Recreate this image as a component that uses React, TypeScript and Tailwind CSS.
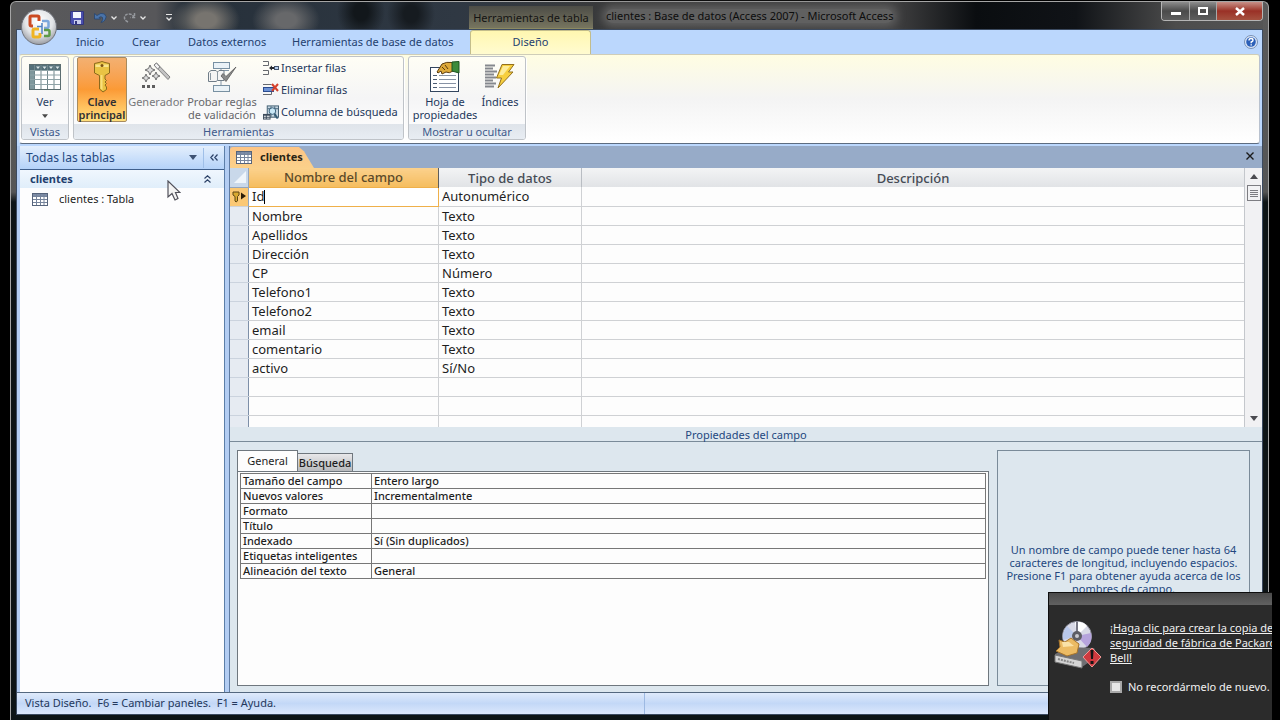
import React from 'react';

const fields = [
  { name: 'Id', type: 'Autonumérico' },
  { name: 'Nombre', type: 'Texto' },
  { name: 'Apellidos', type: 'Texto' },
  { name: 'Dirección', type: 'Texto' },
  { name: 'CP', type: 'Número' },
  { name: 'Telefono1', type: 'Texto' },
  { name: 'Telefono2', type: 'Texto' },
  { name: 'email', type: 'Texto' },
  { name: 'comentario', type: 'Texto' },
  { name: 'activo', type: 'Sí/No' },
  { name: '', type: '' },
  { name: '', type: '' },
  { name: '', type: '' }
];

const properties = [
  { id: 'size', label: 'Tamaño del campo', value: 'Entero largo' },
  { id: 'new-values', label: 'Nuevos valores', value: 'Incrementalmente' },
  { id: 'format', label: 'Formato', value: '' },
  { id: 'title', label: 'Título', value: '' },
  { id: 'indexed', label: 'Indexado', value: 'Sí (Sin duplicados)' },
  { id: 'smart-tags', label: 'Etiquetas inteligentes', value: '' },
  { id: 'align', label: 'Alineación del texto', value: 'General' }
];

/* Icons */

const OfficeLogo = () => (
  <svg width="38" height="38" viewBox="0 0 38 38" fill="none" aria-hidden="true">
    <defs>
      <radialGradient id="orb" cx="50%" cy="35%" r="65%">
        <stop offset="0" stopColor="#ffffff" />
        <stop offset="0.6" stopColor="#e3e5e8" />
        <stop offset="1" stopColor="#9a9da3" />
      </radialGradient>
    </defs>
    <circle cx="19" cy="19" r="17.5" fill="url(#orb)" stroke="#6d7078" />
    <path d="M19 13V9.500Q19 8 17.500 8H11.500Q10 8 10 9.500V16.500Q10 18 11.500 18H13" stroke="#cb4a22" strokeWidth="3" />
    <path d="M22 13H27Q28.500 13 28.500 14.500V18.500Q28.500 20 27 20H24" stroke="#7ba7dc" strokeWidth="2.500" />
    <path d="M19 21H14.500Q13 21 13 22.500V27.500Q13 29 14.500 29H18.500Q20 29 20 27.500V25" stroke="#efb424" strokeWidth="3" />
    <path d="M24 22H28Q29.500 22 29.500 23.500V26.500Q29.500 28 28 28H24" stroke="#5d9a47" strokeWidth="2.500" />
    <path d="M22 15V18.500H17M22 18.500V26" stroke="#4f83c4" strokeWidth="1.500" />
  </svg>
);

const SaveIcon = () => (
  <svg width="14" height="14" viewBox="0 0 14 14" aria-hidden="true">
    <path d="M0.500 0.500H13.500V13.500H2L0.500 12Z" fill="#4a4fae" stroke="#33367c" />
    <path d="M3 1H11V7H3Z" fill="#f3f5fd" />
    <path d="M4 9H11V13H4Z" fill="#c9cdec" />
    <path d="M5 10H7V13H5Z" fill="#33367c" />
  </svg>
);

const UndoIcon = () => (
  <svg width="13" height="12" viewBox="0 0 13 12" aria-hidden="true">
    <path d="M0.500 7V1.500L3 3.500Q7 0 10.500 2Q13.500 4.500 11 8Q9.500 10 7 10.500Q9.500 7.500 8.500 5.500Q7 4 5 5.500L6.500 7Z" fill="#4a73a8" stroke="#27456f" strokeWidth="0.800" />
  </svg>
);

const RedoIcon = () => (
  <svg width="13" height="12" viewBox="0 0 13 12" fill="none" stroke="#95989d" strokeWidth="1.500" aria-hidden="true">
    <path d="M5 10Q1 8 1.500 5Q2.500 2 6 2Q9 2 11 5M11.500 1V5.500H7.500" strokeDasharray="3 1" />
  </svg>
);

const SmallChevron = () => (
  <svg width="6" height="4" viewBox="0 0 6 4" aria-hidden="true">
    <path d="M0.500 0.500L3 3L5.500 0.500" fill="none" stroke="#e6e6e6" strokeWidth="1.300" />
  </svg>
);

const Triangle = ({ className, up }: { className?: string; up?: boolean }) => (
  <svg width="8" height="5" viewBox="0 0 8 5" className={className} aria-hidden="true">
    <path d={up ? 'M0 5L4 0L8 5Z' : 'M0 0H8L4 5Z'} fill="currentColor" />
  </svg>
);

const GridIcon = () => (
  <svg width="32" height="26" viewBox="0 0 32 26" aria-hidden="true">
    <rect x="0.500" y="0.500" width="31" height="25" fill="#ffffff" stroke="#5b6d70" />
    <rect x="1" y="1" width="30" height="5" fill="#54707a" />
    <rect x="1" y="6" width="4" height="19" fill="#7f979c" />
    <path d="M5.500 1V25M12 1V25M18.500 1V25M25 1V25" stroke="#70868b" />
    <path d="M1 6.500H31M1 11H31M1 15.500H31M1 20.500H31" stroke="#8fa3a7" />
    <path d="M7 2.500H11L9 5ZM13.500 2.500H17.500L15.500 5ZM20 2.500H24L22 5ZM26.500 2.500H30.500L28.500 5Z" fill="#dbe6e8" />
  </svg>
);

const TableIcon = () => (
  <svg width="16" height="13" viewBox="0 0 16 13" aria-hidden="true">
    <rect x="0.500" y="0.500" width="15" height="12" fill="#ffffff" stroke="#56647c" />
    <rect x="1" y="1" width="14" height="2" fill="#7d8ca6" />
    <path d="M4.500 1V12M8.500 1V12M12 1V12M1 3.500H15M1 6.500H15M1 9.500H15" stroke="#76849c" />
  </svg>
);

const KeyIcon = () => (
  <svg width="18" height="32" viewBox="0 0 18 32" aria-hidden="true">
    <path
      d="M1.500 2.500L6 1.500L9 0.500L12 1.500L16.500 2.500V12L12 14.500V18L13.500 19.500L12 21L13.500 22.500L12 24L13.500 26V28.500L10 31L6.500 28V14.500L1.500 12Z"
      fill="#e9c344"
      stroke="#8b6a1c"
    />
    <path d="M2.500 3.500H15.500V6H2.500Z" fill="#f8e58e" />
    <path d="M7.500 14H9.500V29L7.500 27.500Z" fill="#f9e07c" />
    <circle cx="9" cy="4.500" r="1.500" fill="#7b5210" />
  </svg>
);

const WandIcon = () => (
  <svg width="30" height="30" viewBox="0 0 30 30" aria-hidden="true">
    <path d="M13 3L15.500 1L29 15L27 17.500Z" fill="#c3c3c3" stroke="#828282" />
    <path d="M13 3L15.500 1L19 5L16.500 7Z" fill="#f3f3f3" stroke="#828282" />
    <path d="M9 3L10.500 6.500L14 8L10.500 9.500L9 13L7.500 9.500L4 8L7.500 6.500Z" fill="#dddddd" stroke="#707070" />
    <path d="M15 10L16.200 12.800L19 14L16.200 15.200L15 18L13.800 15.200L11 14L13.800 12.800Z" fill="#dddddd" stroke="#707070" />
    <path d="M5 12L6.200 14.800L9 16L6.200 17.200L5 20L3.800 17.200L1 16L3.800 14.800Z" fill="#dddddd" stroke="#707070" />
    <path d="M1 23H4V26H1ZM6 23H9V26H6ZM11 23H14V26H11Z" fill="#5e5e5e" />
  </svg>
);

const ValidateIcon = () => (
  <svg width="30" height="32" viewBox="0 0 30 32" aria-hidden="true">
    <path d="M14 7V12M14 20V24M14 9.500H22" stroke="#8296a8" fill="none" />
    <rect x="6.500" y="1.500" width="16" height="6" fill="#eaf2f7" stroke="#7890a2" />
    <rect x="6.500" y="24.500" width="16" height="6" fill="#eaf2f7" stroke="#7890a2" />
    <path d="M1.500 11.500L4 9.500H9L10.500 11L12 9.500H17V19.500H10.500L9 20.500H1.500Z" fill="#f4f4f4" stroke="#707d88" />
    <path d="M10.500 11V20M3.500 12V19" stroke="#8b98a2" />
    <path d="M14 15L19 20.500L29 6L19 15.500L16 12.500Z" fill="#8a8a8a" stroke="#5b5b5b" strokeWidth="0.800" />
  </svg>
);

const InsertRowsIcon = () => (
  <svg width="16" height="16" viewBox="0 0 16 16" fill="none" aria-hidden="true">
    <path d="M0 1.500H5.500V5.500H0M0 10.500H5.500V14.500H0" stroke="#66696e" />
    <path d="M6 8L9 5.500V7H11V9H9V10.500Z" fill="#26282e" />
    <rect x="11.500" y="6.500" width="4" height="3" fill="#b9d0ef" stroke="#44546c" />
  </svg>
);

const DeleteRowsIcon = () => (
  <svg width="16" height="16" viewBox="0 0 16 16" fill="none" aria-hidden="true">
    <path d="M0 2.500H8.500M0 12.500H8.500V10" stroke="#66696e" />
    <rect x="0.500" y="5.500" width="10" height="4" fill="#6d93d6" stroke="#2b4b8f" />
    <path d="M9 2L15 9M15 2L9 9" stroke="#d5412c" strokeWidth="2" />
  </svg>
);

const LookupIcon = () => (
  <svg width="16" height="17" viewBox="0 0 17 17" aria-hidden="true">
    <rect x="4.500" y="1.500" width="12" height="12" fill="#c5d6e2" stroke="#3f5c70" />
    <path d="M5 4.500H16M8.500 2V13M12.500 2V13" stroke="#3f5c70" />
    <circle cx="10" cy="7" r="3.500" fill="#c8e7f6" stroke="#335a74" />
    <path d="M12.500 10L15.500 15" stroke="#335a74" strokeWidth="2" />
    <path d="M0 10H8V16H0Z" fill="#3e4c5c" />
    <path d="M1 12H3V13H1ZM4 12H7V13H4ZM1 14H3V15H1ZM4 14H7V15H4Z" fill="#ffffff" />
  </svg>
);

const PropertySheetIcon = () => (
  <svg width="32" height="32" viewBox="0 0 32 32" aria-hidden="true">
    <rect x="1.500" y="6.500" width="28" height="24" fill="#ffffff" stroke="#34465e" />
    <path d="M4 14.500H8M4 18.500H8M4 22.500H8M4 26.500H8" stroke="#4c5c74" />
    <path d="M10 14.500H27M10 18.500H27M10 22.500H27M10 26.500H27" stroke="#8792a4" />
    <path d="M8 11L13 3Q17 0.500 24 1.500V10Q20 13 17 11L13 13L12 10L9 12Z" fill="#dda93a" stroke="#5b3b0e" />
    <path d="M13 6L16 9M16 4L19 8" stroke="#5b3b0e" />
    <path d="M23 1L30 0.500V12L23 10Z" fill="#3d8b3b" stroke="#1e5421" />
  </svg>
);

const IndexIcon = () => (
  <svg width="32" height="28" viewBox="0 0 32 28" aria-hidden="true">
    <path
      d="M1 2.500H11M1 5.500H9M1 8.500H13M1 11.500H10M1 14.500H12M1 17.500H9M1 20.500H12M1 23.500H10"
      stroke="#85888e"
      strokeWidth="2"
    />
    <path d="M18 1.500H30L24.500 9H29L14 25L17.500 15H12.500Z" fill="#f7cf3e" stroke="#93701d" />
    <path d="M19 3H26L19 12H15Z" fill="#fdec9a" />
  </svg>
);

const DiscIcon = () => (
  <svg width="48" height="50" viewBox="0 0 48 50" aria-hidden="true">
    <circle cx="23" cy="16" r="14.500" fill="#d8d9e6" stroke="#8c8c98" />
    <path d="M23 16L21 2Q29 1 33 6Z" fill="#ffffff" />
    <path d="M23 16L37 13Q39 22 33 27Z" fill="#b6a4dd" />
    <path d="M23 16L9 20Q8 12 13 6Z" fill="#b9c8ea" />
    <path d="M23 1.500V16" stroke="#777784" strokeWidth="2" />
    <circle cx="23" cy="16" r="5" fill="#5d5d64" />
    <circle cx="23" cy="16" r="2" fill="#c9c9ce" />
    <path d="M1 34L16 27L40 28L44 36L28 47L1 41Z" fill="#6e6e72" />
    <path d="M1 35L28 41V48L1 42Z" fill="#d4d4d4" stroke="#777777" />
    <path d="M4 39L20 43" stroke="#888888" strokeWidth="2" strokeDasharray="2 1" />
    <path d="M5 20L11 22L17 18L25 24L23 33L13 36L2 31L6 27Z" fill="#ecbb64" stroke="#a6742b" />
    <path d="M8 22L15 22L20 26L9 27Z" fill="#fae2a8" />
    <path d="M38 28L47 37L38 47L29 37Z" fill="#cf3a3f" stroke="#f19794" />
    <path d="M36.500 30H39.500L39 39H37ZM36.500 41H39.500V44H36.500Z" fill="#141414" />
  </svg>
);

const Cursor = () => (
  <svg width="14" height="22" viewBox="0 0 14 22" aria-hidden="true">
    <path d="M1 1V17L5 13.500L8 20L11 18.500L8.500 12.500H13Z" fill="#f3f3f3" stroke="#50505a" strokeWidth="1.200" />
  </svg>
);

/* Ribbon pieces */

interface RibbonGroupProps {
  title: string;
  children: React.ReactNode;
}

const RibbonGroup: React.FC<RibbonGroupProps> = ({ title, children }) => (
  <section className="flex flex-col rounded-[3px] border border-[#bfc3c8] bg-gradient-to-b from-[#fffef5] via-[#f5f5f6] to-white shadow-[1px_1px_0_#ffffff]">
    <div className="flex flex-1 items-start px-[3px]">{children}</div>
    <h2 className="h-[15px] rounded-b-[2px] bg-gradient-to-b from-[#dfe4ea] to-[#e8edf3] text-center text-[11px] leading-[15px] text-[#3e5a8c]">
      {title}
    </h2>
  </section>
);

interface BigButtonProps {
  icon: React.ReactNode;
  className?: string;
  children: React.ReactNode;
}

const BigButton: React.FC<BigButtonProps> = ({ icon, className, children }) => (
  <button type="button" className={`flex h-[65px] flex-col items-center rounded-[2px] border pt-px text-[11px] leading-[13px] whitespace-nowrap ${className}`}>
    <span className="flex h-9 items-center justify-center">{icon}</span>
    {children}
  </button>
);

const TitleBar = () => (
  <header className="flex h-[27px] items-start bg-[radial-gradient(ellipse_34px_24px_at_190px_18px,#77746f_30%,transparent),radial-gradient(ellipse_34px_24px_at_270px_18px,#67686a_30%,transparent),radial-gradient(ellipse_24px_28px_at_345px_10px,#12171b_30%,transparent),radial-gradient(ellipse_24px_28px_at_395px_12px,#161b20_30%,transparent),linear-gradient(90deg,#59595b_0,#57575a_140px,#26303a_170px,#2f3843_440px,#3a3a3a_600px,#3f3f40_880px,#0a0d10_960px,#101317_1060px,#4c4c4c_1160px,#555555_100%)]">
    <div className="ml-11 flex h-full w-[96px] items-center rounded-r-full pt-1 pl-2.5">
      <button type="button" aria-label="Guardar"><SaveIcon /></button>
      <button type="button" aria-label="Deshacer" className="ml-2.5"><UndoIcon /></button>
      <button type="button" aria-label="Opciones de deshacer" className="ml-1"><SmallChevron /></button>
      <button type="button" aria-label="Rehacer" className="ml-1.5"><RedoIcon /></button>
      <button type="button" aria-label="Opciones de rehacer" className="ml-1"><SmallChevron /></button>
    </div>
    <button type="button" aria-label="Personalizar" className="mt-3 ml-2.5 flex flex-col items-center gap-0.5">
      <span className="h-px w-1.5 bg-[#e6e6e6]" />
      <SmallChevron />
    </button>
    <div className="mt-1 ml-[297px] h-[23px] w-[124px] border-b border-[#8c8a62] bg-gradient-to-b from-[#4c4c46] to-[#77755f] text-center text-[11px] leading-6 whitespace-nowrap text-[#131313]">
      Herramientas de tabla
    </div>
    <h1 className="mt-[7px] ml-[13px] rounded-full bg-[#606060] text-[11px] leading-[14px] whitespace-nowrap text-[#0d0d0d] shadow-[0_0_8px_4px_#606060]">
      clientes : Base de datos (Access 2007) - Microsoft Access
    </h1>
    <div className="ml-auto flex h-[19px] overflow-hidden rounded-b-[4px] border border-t-0 border-[#b5b5b5]">
      <button type="button" aria-label="Minimizar" className="flex w-7 items-center justify-center border-r border-[#a8a8a8] bg-gradient-to-b from-[#8d8d8d] via-[#4b4b4b] to-[#5d5d5d]">
        <span className="mt-1 h-[3px] w-2.5 bg-white" />
      </button>
      <button type="button" aria-label="Restaurar" className="flex w-[27px] items-center justify-center border-r border-[#a8a8a8] bg-gradient-to-b from-[#8d8d8d] via-[#4b4b4b] to-[#5d5d5d]">
        <span className="h-2 w-2.5 border-2 border-white" />
      </button>
      <button type="button" aria-label="Cerrar" className="flex w-[45px] items-center justify-center bg-gradient-to-b from-[#c79088] via-[#9a3026] to-[#a5513f]">
        <svg width="10" height="9" viewBox="0 0 10 9" aria-hidden="true">
          <path d="M1 1L9 8M9 1L1 8" stroke="#ffffff" strokeWidth="2.500" />
        </svg>
      </button>
    </div>
  </header>
);

const RibbonTabs = () => (
  <nav className="flex h-6 items-center bg-[#bbd7fd] pl-[59px] text-[11px] whitespace-nowrap text-[#24416f]">
    <button type="button" className="w-7">Inicio</button>
    <button type="button" className="ml-7 w-7">Crear</button>
    <button type="button" className="ml-7 w-[76px]">Datos externos</button>
    <button type="button" className="ml-7 w-[160px]">Herramientas de base de datos</button>
    <button type="button" className="ml-[18px] h-full w-[121px] self-end rounded-t-[3px] border border-b-0 border-[#c3bd8c] bg-gradient-to-b from-[#fff7b0] to-[#fffbd0]">
      Diseño
    </button>
    <button type="button" aria-label="Ayuda" className="mr-1 ml-auto">
      <svg width="14" height="14" viewBox="0 0 14 14" aria-hidden="true">
        <circle cx="7" cy="7" r="6.500" fill="#dce8f8" stroke="#7890b5" />
        <circle cx="7" cy="7" r="4.800" fill="#2b5fb8" />
        <path d="M5 5.500Q5 3.500 7 3.500Q9 3.500 9 5.200Q9 6.300 7.200 7V8.200M7.200 9.300V10.600" fill="none" stroke="#ffffff" strokeWidth="1.400" />
      </svg>
    </button>
  </nav>
);

const Ribbon = () => (
  <div className="bg-[#bbd7fd] px-0.5 pb-0.5">
    <div className="flex h-[90px] gap-1 rounded-[3px] border border-t-[#cfcdb8] border-r-[#b9c2cf] border-b-[#5d6c80] border-l-[#e0e4ea] bg-gradient-to-b from-[#fffde2] via-[#f4f4f4] to-white px-px pt-px pb-[3px] whitespace-nowrap">
      <RibbonGroup title="Vistas">
        <BigButton icon={<GridIcon />} className="w-10 border-transparent text-[#2b3f63]">
          Ver
          <Triangle className="mt-1.5 h-1 w-1.5 text-[#4a4a4a]" />
        </BigButton>
      </RibbonGroup>

      <RibbonGroup title="Herramientas">
        <BigButton
          icon={<KeyIcon />}
          className="w-[50px] border-[#a88b5e] bg-gradient-to-b from-[#f3b071] via-[#fb9a35] to-[#ffe07c] font-semibold text-[#2f2f33]"
        >
          <span>Clave</span>
          <span>principal</span>
        </BigButton>
        <BigButton icon={<WandIcon />} className="w-[58px] border-transparent text-[#77777b]">
          Generador
        </BigButton>
        <BigButton icon={<ValidateIcon />} className="w-[74px] border-transparent text-[#66666a]">
          <span>Probar reglas</span>
          <span>de validación</span>
        </BigButton>
        <div className="ml-1 flex flex-col text-[11px] text-[#24385c]">
          <button type="button" className="flex h-[22px] items-center gap-0.5"><InsertRowsIcon />Insertar filas</button>
          <button type="button" className="flex h-[22px] items-center gap-0.5"><DeleteRowsIcon />Eliminar filas</button>
          <button type="button" className="flex h-[22px] w-[137px] items-center gap-0.5"><LookupIcon />Columna de búsqueda</button>
        </div>
      </RibbonGroup>

      <RibbonGroup title="Mostrar u ocultar">
        <BigButton icon={<PropertySheetIcon />} className="w-[66px] border-transparent text-[#24385c]">
          <span>Hoja de</span>
          <span>propiedades</span>
        </BigButton>
        <BigButton icon={<IndexIcon />} className="w-[44px] border-transparent text-[#24385c]">
          Índices
        </BigButton>
      </RibbonGroup>
    </div>
  </div>
);

const NavigationPane = () => (
  <aside className="relative flex w-[205px] shrink-0 flex-col border-r border-[#5c7ea8] bg-[#fdfdfe]">
    <div className="flex h-6 items-center border-b border-[#3f5f8c] bg-gradient-to-b from-[#e4effc] to-[#b4d2f9] pl-1.5 text-[#24487f]">
      <span className="flex-1 text-xs">Todas las tablas</span>
      <button type="button" aria-label="Elegir categoría" className="pr-1.5"><Triangle className="text-[#3e5273]" /></button>
      <button type="button" aria-label="Contraer panel" className="flex h-5 w-[21px] items-center justify-center border-l border-[#9fbfe8]">
        <svg width="8" height="7" viewBox="0 0 8 7" fill="none" stroke="#2c4167" strokeWidth="1.200" aria-hidden="true">
          <path d="M3.500 0.500L0.800 3.500L3.500 6.500M7.500 0.500L4.800 3.500L7.500 6.500" />
        </svg>
      </button>
    </div>
    <button type="button" className="flex h-[18px] items-center justify-between bg-gradient-to-b from-[#f0f7fe] to-[#e0eefa] pr-[13px] pl-2.5 text-[11px] font-bold text-[#24416f]">
      clientes
      <svg width="7" height="8" viewBox="0 0 7 8" fill="none" stroke="#2c4167" strokeWidth="1.200" aria-hidden="true">
        <path d="M0.500 3.500L3.500 0.800L6.500 3.500M0.500 7.500L3.500 4.800L6.500 7.500" />
      </svg>
    </button>
    <a href="#clientes" className="flex h-[22px] items-center gap-[11px] pl-3 text-[11px] text-[#1c1c1c]">
      <TableIcon />
      clientes : Tabla
    </a>
    <div className="pointer-events-none absolute top-[34px] left-[147px]"><Cursor /></div>
  </aside>
);

const DesignGrid = () => (
  <div className="flex h-[259px] shrink-0 overflow-hidden bg-[#fdfdfd]">
    <table className="h-[266px] flex-1 table-fixed border-collapse text-[13px] leading-[18px] text-[#1e1e1e]">
      <colgroup>
        <col className="w-[18px]" />
        <col className="w-[190px]" />
        <col className="w-[143px]" />
        <col />
      </colgroup>
      <thead>
        <tr className="h-[19px] bg-gradient-to-b from-[#f3f4f5] to-[#e1e3e6] text-[#454b55]">
          <th aria-label="Seleccionar todo" className="border-r border-b border-[#93a5bd] bg-[#c9d8ea] p-0">
            <svg width="12" height="12" viewBox="0 0 12 12" className="ml-1" aria-hidden="true">
              <path d="M12 0V12H0Z" fill="#eff5fb" />
            </svg>
          </th>
          <th className="border-r border-[#5d5d5d] bg-gradient-to-b from-[#fbd18c] to-[#f5bd5e] p-0 font-medium text-[#5b4a2a]">Nombre del campo</th>
          <th className="border-r border-[#b9bdc3] p-0 font-medium">Tipo de datos</th>
          <th className="p-0 font-medium">Descripción</th>
        </tr>
      </thead>
      <tbody>
        {fields.map((field, i) => (
          <tr key={i} className="h-[19px] border-b border-[#cfd1d4]">
            <td className={i === 0 ? 'border-r border-[#93a5bd] bg-[#fbc874] p-0' : 'border-r border-b border-r-[#7d8fa8] border-b-[#cbd3de] bg-[#e6ebf2] p-0'}>
              {i === 0 && (
                <svg width="16" height="12" viewBox="0 0 16 12" className="ml-0.5" aria-label="Clave principal">
                  <path d="M1 1H7V4L5.500 5.500V10L4 11L3 10V5.500L1 4Z" fill="#d9a930" stroke="#5e4512" />
                  <path d="M9 1.500L14 5L9 8.500Z" fill="#2b1d08" />
                </svg>
              )}
            </td>
            {i === 0 ? (
              <td className="border border-[#efb04a] bg-white p-0 pl-[3px]">
                <div className="flex h-[17px] items-center">
                  <input aria-label="Nombre del campo" defaultValue={field.name} className="[field-sizing:content] p-0 leading-[17px] outline-none" />
                  <span className="h-3.5 w-px bg-black" />
                </div>
              </td>
            ) : (
              <td className="border-r border-[#cfd1d4] p-0 pl-[3px]">{field.name}</td>
            )}
            <td className="border-r border-[#cfd1d4] p-0 pl-[3px]">{field.type}</td>
            <td className="p-0" />
          </tr>
        ))}
      </tbody>
    </table>

    {/* Scroll bar */}
    <div className="flex w-[18px] flex-col items-center justify-between border-l border-[#c4c7cc] bg-[#f1f1f3] py-1.5 text-[#4b4b50]">
      <button type="button" aria-label="Subir" className="flex flex-col items-center gap-1.5">
        <Triangle up />
        <span className="flex h-4 w-3.5 flex-col items-end justify-center gap-px border border-[#7d7d82] bg-[#f2f2f4] pr-0.5">
          <span className="h-px w-2 bg-[#7d7d82]" />
          <span className="h-px w-2 bg-[#7d7d82]" />
          <span className="h-px w-2 bg-[#7d7d82]" />
          <span className="h-px w-2 bg-[#7d7d82]" />
        </span>
      </button>
      <button type="button" aria-label="Bajar"><Triangle /></button>
    </div>
  </div>
);

const FieldProperties = () => (
  <div className="flex min-h-[249px] flex-1 gap-2 pt-2 pr-3 pb-1.5 pl-[7px]">
    <div className="flex flex-1 flex-col text-[11px] text-[#1e1e1e]">
      <div className="flex items-end" role="tablist">
        <button type="button" role="tab" aria-selected="true" className="h-[21px] w-[61px] border border-b-0 border-[#6f777e] bg-[#fdfdfd]">General</button>
        <button type="button" role="tab" aria-selected="false" className="h-[18px] w-[55px] border border-b-0 border-l-0 border-[#6f777e] bg-gradient-to-b from-[#e8e8ea] to-[#b8babd] leading-4 font-medium">
          Búsqueda
        </button>
      </div>
      <div className="flex-1 border border-[#6f777e] bg-[#fdfdfd] px-0.5 py-px" role="tabpanel">
        <table className="w-full table-fixed border-collapse leading-[14px]">
          <colgroup>
            <col className="w-[131px]" />
            <col />
          </colgroup>
          <tbody>
            {properties.map((p) => (
              <tr key={p.id} className="h-[15px]">
                <th className="border border-[#777777] p-0 pl-0.5 text-left font-medium whitespace-nowrap">
                  <label htmlFor={p.id}>{p.label}</label>
                </th>
                <td className="border border-[#777777] p-0 pl-0.5">
                  <input id={p.id} defaultValue={p.value} className="block h-3.5 w-full p-0 leading-[14px] font-medium outline-none" />
                </td>
              </tr>
            ))}
          </tbody>
        </table>
      </div>
    </div>

    <div className="w-[253px] border border-[#7a8b99] px-1 pt-[92px] text-center text-[11px] leading-[13px] text-[#24487f]">
      Un nombre de campo puede tener hasta 64 caracteres de longitud, incluyendo espacios. Presione F1 para obtener ayuda acerca de los nombres de campo.
    </div>
  </div>
);

const BackupNotice = () => (
  <div className="absolute right-2 bottom-0 h-32 w-[224px] overflow-hidden border-t border-l border-[#0e0e0e] bg-[#2b2b2b] text-[11px] text-[#f1f1f1]" role="alert">
    <div className="h-3 bg-gradient-to-b from-[#4a4a4a] to-[#616161]" />
    <div className="flex gap-2 pt-[15px] pl-[5px]">
      <div className="w-12 shrink-0"><DiscIcon /></div>
      <div className="whitespace-nowrap">
        <a href="#copia" className="block leading-[15px] underline">
          ¡Haga clic para crear la copia de
          <br />
          seguridad de fábrica de Packard
          <br />
          Bell!
        </a>
        <label className="mt-3.5 flex items-center gap-1.5">
          <input type="checkbox" className="size-3 appearance-none border-2 border-[#a9a9a9] bg-[#e7e7e7]" />
          No recordármelo de nuevo.
        </label>
      </div>
    </div>
  </div>
);

export default function App() {
  return (
    <div className="relative flex min-h-screen flex-col overflow-hidden bg-black pt-px pr-[11px] pl-2.5 font-['Noto_Sans','Open_Sans',sans-serif]">
      <div className="relative flex flex-1 flex-col rounded-t-[6px] border border-b-0 border-[#a5a5a5] bg-[linear-gradient(#5a5a5a_0,#555555_190px,#0d1416_200px,#0d1416_100%)] px-[5px]">
        <TitleBar />
        <button type="button" aria-label="Botón de Office" className="absolute top-1.5 left-[9px]"><OfficeLogo /></button>

        <main className="mb-[5px] flex flex-1 flex-col border border-[#3b4a60] bg-[#bbd7fd]">
          <RibbonTabs />
          <Ribbon />

          <div className="flex flex-1 bg-[#b3cdf3] pl-[3px]">
            <NavigationPane />
            <div className="w-[5px] shrink-0 border-r border-[#5f7ba3]" />
            <div className="flex min-w-0 flex-1 flex-col bg-[#dde7ee]">
              <div className="flex h-[22px] items-end justify-between bg-[#97abc8] pr-2">
                <button type="button" className="flex h-[21px] w-[84px] items-center gap-2 rounded-tl-[3px] bg-gradient-to-b from-[#fdc585] to-[#fbd08a] pl-1.5 text-[11px] font-bold text-[#2c2415] [clip-path:polygon(0_0,82%_0,88%_20%,100%_100%,0_100%)]">
                  <TableIcon />
                  clientes
                </button>
                <button type="button" aria-label="Cerrar tabla" className="mb-2">
                  <svg width="8" height="8" viewBox="0 0 8 8" aria-hidden="true">
                    <path d="M0.500 0.500L7.500 7.500M7.500 0.500L0.500 7.500" stroke="#1b1b1b" strokeWidth="1.400" />
                  </svg>
                </button>
              </div>
              <DesignGrid />
              <h2 className="h-[15px] border-b border-[#7a8b99] text-center text-[11px] leading-[15px] text-[#24487f]">Propiedades del campo</h2>
              <FieldProperties />
            </div>
          </div>

          <footer className="flex h-[22px] items-center border-t border-[#54687f] bg-gradient-to-b from-[#dfeafb] via-[#c3d8f7] to-[#dce8fc] pl-2 text-[11px] whitespace-pre text-[#24385c]">
            <span className="flex-1">Vista Diseño.  F6 = Cambiar paneles.  F1 = Ayuda.</span>
            <span className="h-full w-1/2 border-l border-[#9db9e2]" />
          </footer>
        </main>
      </div>
      <BackupNotice />
    </div>
  );
}
